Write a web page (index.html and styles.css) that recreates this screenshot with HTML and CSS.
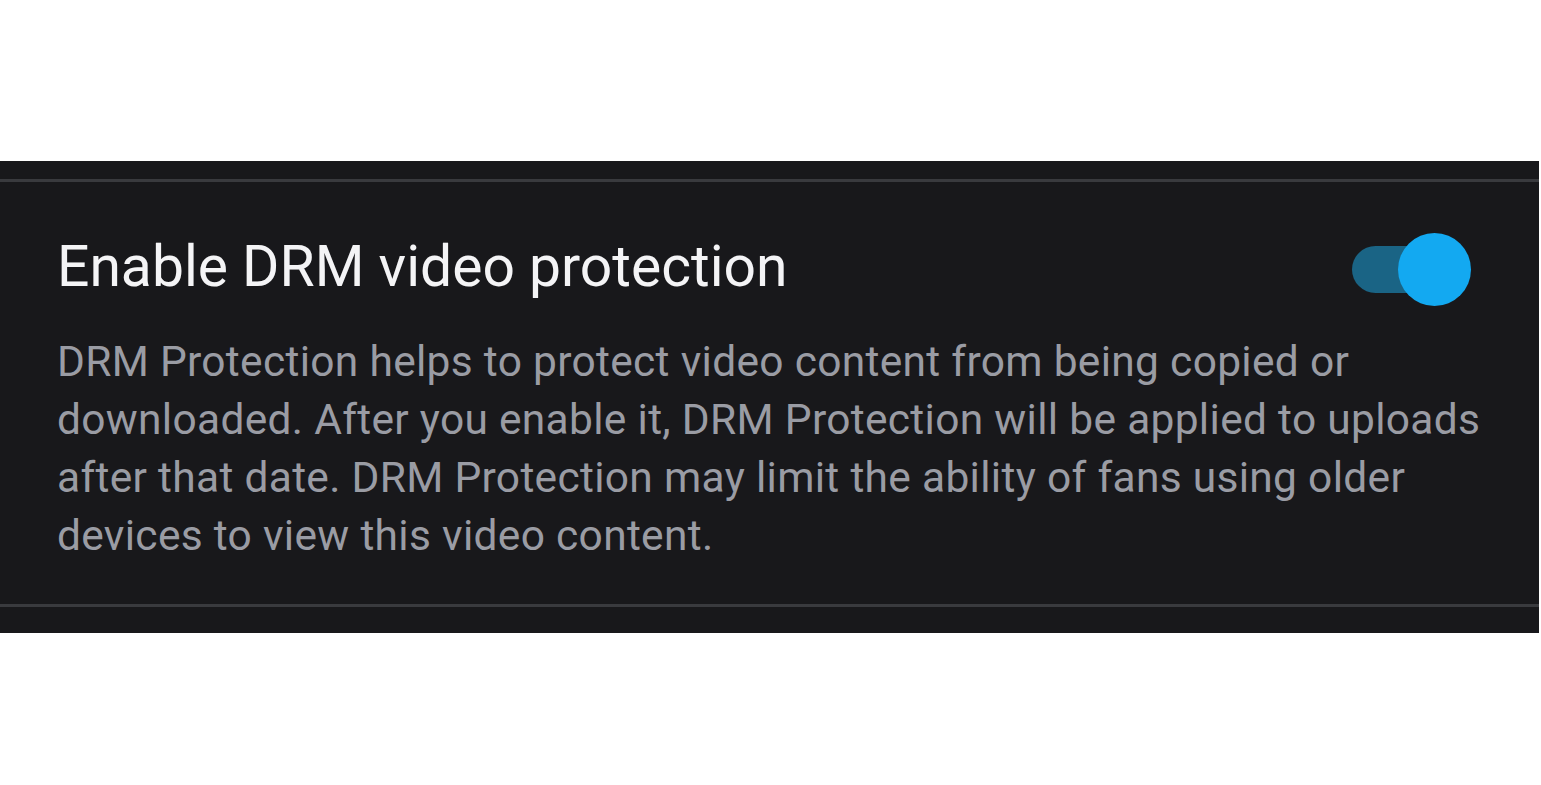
FILE: index.html
```html
<!DOCTYPE html>
<html>
	<head>
		<title>DRM setting</title>
		<link rel="stylesheet" href="styles.css">
	</head>
	<body>
		<div class="panel">
			<div class="divider"></div>
			<div class="setting">
				<div class="setting-head">
					<h2 class="setting-title">Enable DRM video protection</h2>
					<div class="toggle">
						<div class="toggle-track"></div>
						<div class="toggle-knob"></div>
					</div>
				</div>
				<p class="setting-desc">DRM Protection helps to protect video content from being copied or downloaded. After you enable it, DRM Protection will be applied to uploads after that date. DRM Protection may limit the ability of fans using older devices to view this video content.</p>
			</div>
			<div class="divider"></div>
		</div>
	</body>
</html>
```

FILE: styles.css
```css
body
{
	margin : 0;
	background-color : #ffffff;
	font-family : Roboto, "Noto Sans", sans-serif;
}
.panel
{
	margin-top : 161px;
	width : 1539px;
	height : 472px;
	background-color : #18181b;
	padding-top : 18px;
	box-sizing : border-box;
}
.divider
{
	height : 3px;
	background-color : #393a3e;
}
.setting
{
	padding : 48.5px 42px 0 57px;
	height : 422px;
	box-sizing : border-box;
}
.setting-head
{
	display : flex;
	align-items : flex-start;
	justify-content : space-between;
	padding-right : 26px;
}
.setting-title
{
	margin : 0;
	font-weight : 400;
	font-size : 57px;
	line-height : 72px;
	color : #f4f4f6;
}
.toggle
{
	position : relative;
	width : 119px;
	height : 73px;
	margin-top : 2.5px;
}
.toggle-track
{
	position : absolute;
	left : 0;
	top : 13px;
	width : 100px;
	height : 47px;
	border-radius : 24px;
	background-color : #1a6485;
}
.toggle-knob
{
	position : absolute;
	right : 0;
	top : 0;
	width : 73px;
	height : 73px;
	border-radius : 50%;
	background-color : #13a9f1;
}
.setting-desc
{
	margin : 26.8px 0 0 0;
	font-size : 42.5px;
	letter-spacing : 0.3px;
	line-height : 58px;
	color : #9a9ca4;
}
```
